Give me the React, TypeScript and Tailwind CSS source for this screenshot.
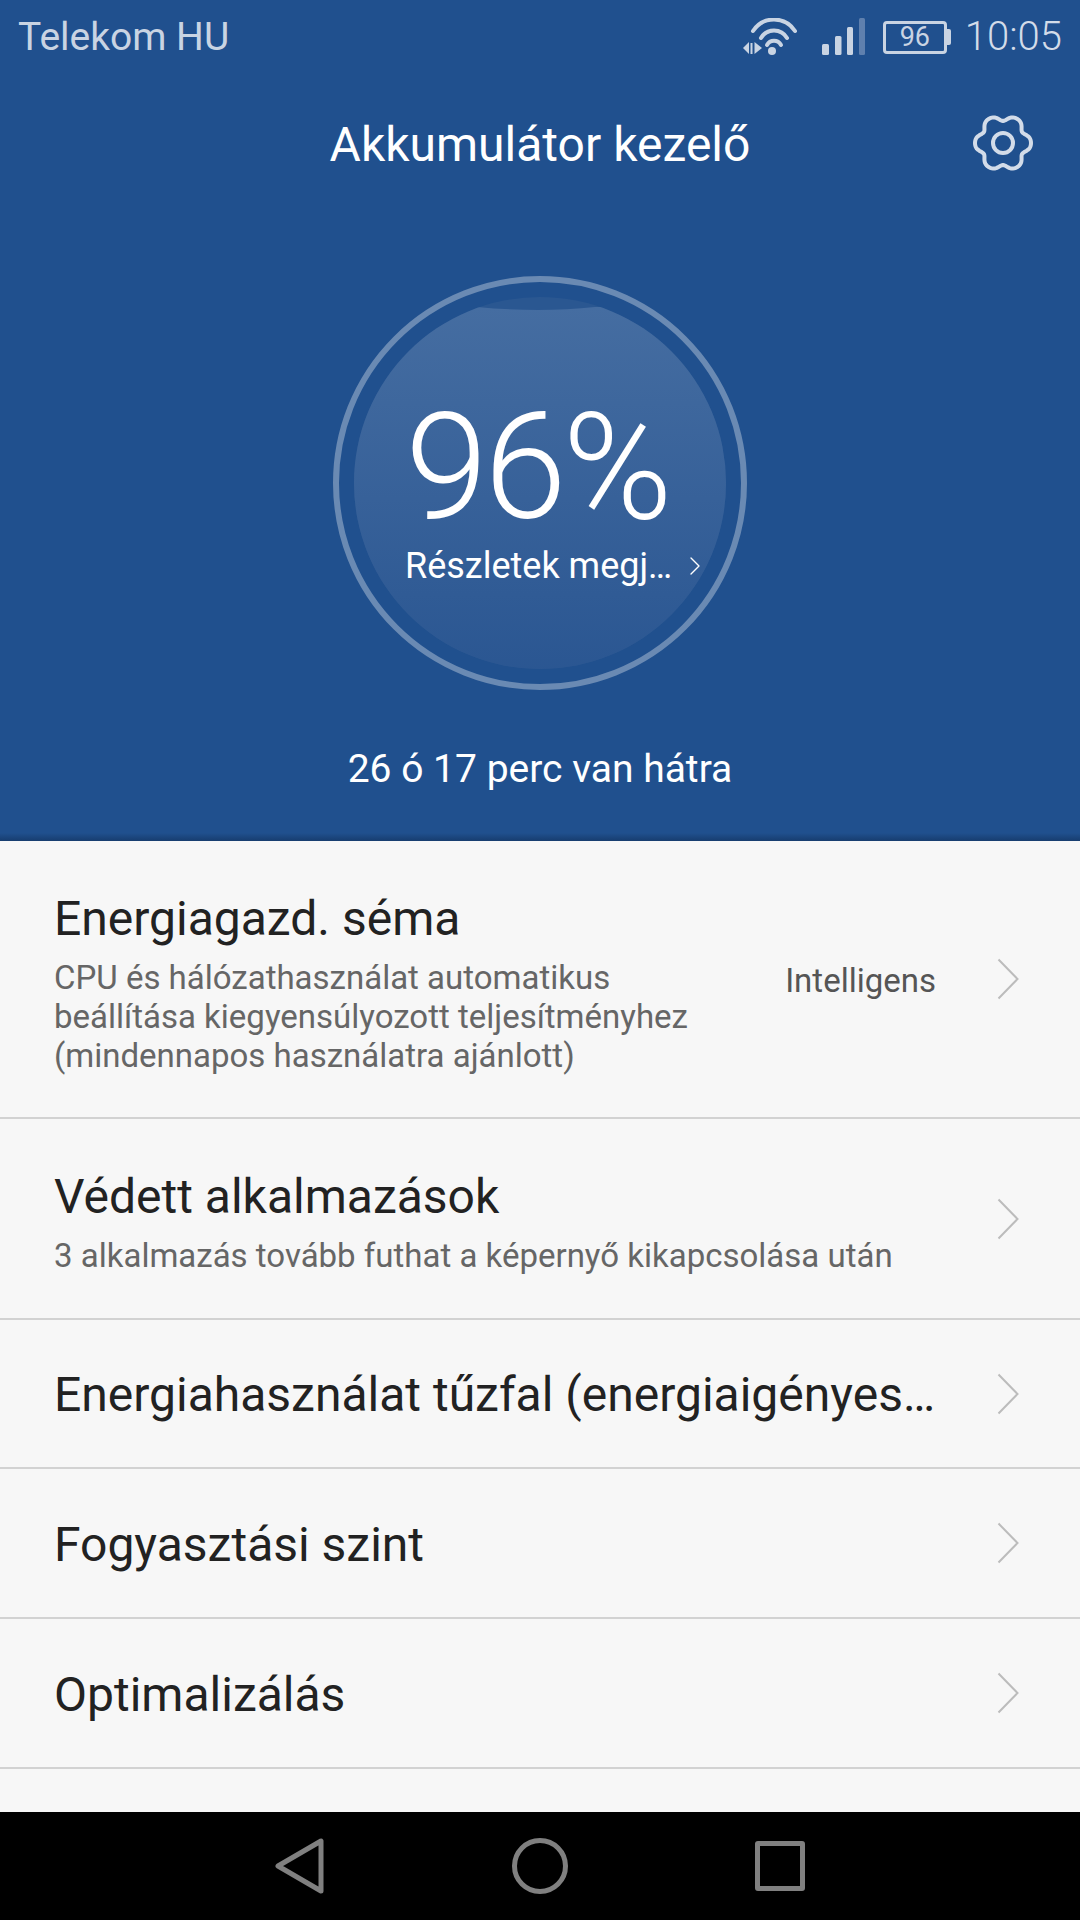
import { ChevronRight } from 'lucide-react'

// six-lobed settings cog outline, centre 32,30
function gearPath() {
  const pts: string[] = []
  for (let i = 0; i < 120; i++) {
    const a = (i / 120) * Math.PI * 2
    const r = 25.5 + 3 * Math.cos(6 * a) - 0.5 * Math.cos(12 * a)
    pts.push(`${(32 + r * Math.cos(a)).toFixed(2)},${(30 + r * Math.sin(a)).toFixed(2)}`)
  }
  return 'M' + pts.join('L') + 'Z'
}

function Wifi() {
  return (
    <svg width="56" height="38" viewBox="0 0 56 38" fill="none" className="text-[#c9d4e3]">
      <path d="M11 13 A25 25 0 0 1 53 13" stroke="currentColor" strokeWidth="4" strokeLinecap="round" />
      <path d="M19 20 A15 15 0 0 1 45 20" stroke="currentColor" strokeWidth="4" strokeLinecap="round" />
      <path d="M25 27 A8 8 0 0 1 39 27" stroke="currentColor" strokeWidth="4" strokeLinecap="round" />
      <circle cx="30" cy="33" r="4" fill="currentColor" />
      <path d="M1 30 L7 24 V36 H7 Z" fill="currentColor" />
      <path d="M8.5 25 H10.5 V36 H8.5 Z" fill="currentColor" />
      <path d="M12.5 24 L20 30 L12.5 36 Z" fill="currentColor" />
    </svg>
  )
}

function Signal() {
  return (
    <svg width="44" height="38" viewBox="0 0 44 38">
      <rect x="0" y="26" width="7" height="11" rx="1.5" fill="#c9d4e3" />
      <rect x="13" y="18" width="6.5" height="19" rx="1.5" fill="#c9d4e3" />
      <rect x="25" y="9" width="6" height="28" rx="1.5" fill="#c9d4e3" />
      <rect x="37" y="0" width="6" height="37" rx="1.5" fill="#5f80ae" />
    </svg>
  )
}

function Battery() {
  return (
    <div className="flex items-center">
      <div className="w-[64px] h-[33px] rounded-[4px] border-[3px] border-[#c9d4e3] flex items-center justify-center text-[#c9d4e3] text-[27px] leading-none">96</div>
      <div className="w-[4px] h-[16px] bg-[#c9d4e3] rounded-r-[2px]" />
    </div>
  )
}

function Chevron() {
  return (
    <svg width="22" height="42" viewBox="0 0 22 42" fill="none" className="shrink-0">
      <path d="M1.5 1.5 L20.5 21 L1.5 40.5" stroke="#bcbcbc" strokeWidth="2" />
    </svg>
  )
}

function Row({ title, sub, value, className }: { title: string; sub?: string[]; value?: string; className: string }) {
  return (
    <div className={`flex items-center pl-[54px] pr-[61px] border-b-2 border-[#d2d2d2] ${className}`}>
      <div className={`flex-1 min-w-0 ${sub ? 'pt-[7px]' : 'pt-[3px]'}`}>
        <div className="text-[48px] leading-[56px] text-[#222222] whitespace-nowrap">{title}</div>
        {sub && (
          <div className="mt-[11px] text-[33px] leading-[39px] text-[#666666]">
            {sub.map(s => <div key={s} className="whitespace-nowrap">{s}</div>)}
          </div>
        )}
      </div>
      {value && <div className="text-[33px] text-[#555555] mr-[61px] pt-[3px]">{value}</div>}
      <Chevron />
    </div>
  )
}

export default function App() {
  return (
    <div className="w-[1080px] h-[1920px] flex flex-col overflow-hidden bg-[#f7f7f7]" style={{ fontFamily: 'Roboto, sans-serif' }}>
      <div className="h-[841px] shrink-0 bg-[#20508e] flex flex-col items-center relative">
        {/* status bar */}
        <div className="w-full h-[74px] flex items-center pl-[18px] pr-[18px] text-[#c9d4e3]">
          <span className="text-[39px]">Telekom HU</span>
          <div className="ml-auto flex items-center">
            <Wifi />
            <div className="ml-[24px]"><Signal /></div>
            <div className="ml-[17px]"><Battery /></div>
            <span className="ml-[14px] text-[40px] font-light text-[#d3dce9]">10:05</span>
          </div>
        </div>

        {/* title */}
        <div className="w-full h-[142px] flex items-center justify-center relative">
          <span className="text-white text-[48px]">Akkumulátor kezelő</span>
          <svg width="64" height="60" viewBox="0 0 64 60" fill="none" className="absolute left-[971px] top-[39px]">
            <path d={gearPath()} stroke="#d3dce9" strokeWidth="4" strokeLinejoin="round" />
            <circle cx="32" cy="30" r="10" stroke="#d3dce9" strokeWidth="4" />
          </svg>
        </div>

        {/* gauge */}
        <div className="mt-[60px] w-[414px] h-[414px] relative flex flex-col items-center text-white">
          <svg width="414" height="414" viewBox="0 0 414 414" className="absolute inset-0">
            <defs>
              <linearGradient id="fill" x1="0" y1="0" x2="0" y2="1">
                <stop offset="0" stopColor="#456da1" />
                <stop offset="1" stopColor="#295591" />
              </linearGradient>
              <clipPath id="disc"><circle cx="207" cy="207" r="186" /></clipPath>
            </defs>
            <circle cx="207" cy="207" r="204" fill="none" stroke="#6a8ab3" strokeWidth="6" />
            <circle cx="207" cy="207" r="186" fill="#2a5791" />
            <path d="M0 31 H144 Q207 37 262 31 H414 V414 H0 Z" fill="url(#fill)" clipPath="url(#disc)" />
          </svg>
          <div className="relative mt-[116px] mr-[6px] text-[149px] leading-[150px] font-light tracking-[-4px]">96%</div>
          <div className="relative mt-[2px] w-full flex items-center pl-[72px]">
            <span className="text-[36px] leading-[44px]">Részletek megj…</span>
            <ChevronRight size={32} strokeWidth={1} className="ml-[7px]" />
          </div>
        </div>

        <div className="mt-[56px] text-white text-[39px] leading-[46px]">26 ó 17 perc van hátra</div>

        <div className="absolute left-0 right-0 bottom-0 h-[8px] bg-gradient-to-b from-[#20508e] to-[#173d6f]" />
      </div>

      <div className="flex-1 flex flex-col">
        <Row className="h-[278px]" title="Energiagazd. séma" value="Intelligens" sub={['CPU és hálózathasználat automatikus', 'beállítása kiegyensúlyozott teljesítményhez', '(mindennapos használatra ajánlott)']} />
        <Row className="h-[201px]" title="Védett alkalmazások" sub={['3 alkalmazás tovább futhat a képernyő kikapcsolása után']} />
        <Row className="h-[149px]" title="Energiahasználat tűzfal (energiaigényes…" />
        <Row className="h-[150px]" title="Fogyasztási szint" />
        <Row className="h-[150px]" title="Optimalizálás" />
      </div>

      {/* nav bar */}
      <div className="h-[108px] shrink-0 bg-black flex items-center pl-[275px]">
        <svg width="50" height="56" viewBox="0 0 50 56" fill="none">
          <path d="M46 3 V53 L3 28 Z" stroke="#808080" strokeWidth="5" strokeLinejoin="round" />
        </svg>
        <div className="ml-[187px] w-[56px] h-[56px] rounded-full border-[5px] border-[#808080]" />
        <div className="ml-[187px] w-[50px] h-[50px] rounded-[3px] border-[5px] border-[#808080]" />
      </div>
    </div>
  )
}
